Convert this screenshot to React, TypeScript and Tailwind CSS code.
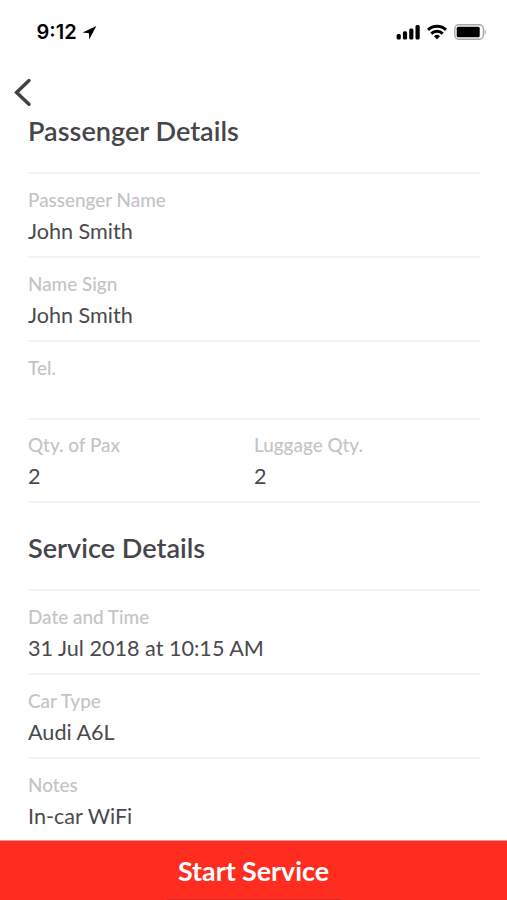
interface FieldProps {
  label: string;
  value?: string;
}

const Field = ({ label, value }: FieldProps) => (
  <div className="flex-1">
    <div className="text-[18.9px] leading-[24px] font-medium text-[#c4c4c6]">{label}</div>
    <div className="mt-[5px] h-[28px] text-[21.6px] leading-[28px] text-[#4a4a4e]">{value}</div>
  </div>
);

const StatusBar = () => (
  <div className="flex h-[64px] items-center justify-between pr-[20px] pl-[36.5px] font-['Inter',sans-serif] text-black">
    <div className="flex items-center gap-[5px]">
      <span className="text-[20px] font-semibold">9:12</span>
      <svg width="15" height="15" viewBox="0 0 15 15" fill="currentColor">
        <path d="M14.4 1 L7.2 14.6 L7 8.3 L0.6 7.4 Z" />
      </svg>
    </div>
    <div className="flex items-center gap-[7px]">
      <svg width="24" height="16" viewBox="0 0 24 16" fill="currentColor">
        <rect x="0.6" y="10" width="4.2" height="5.4" rx="1.5" />
        <rect x="6.9" y="7.3" width="4.2" height="8.1" rx="1.5" />
        <rect x="13.2" y="4.4" width="4.2" height="11" rx="1.5" />
        <rect x="19.5" y="1" width="4.2" height="14.4" rx="1.5" />
      </svg>
      <svg width="20" height="16" viewBox="0 0 20 16" fill="none" stroke="currentColor" strokeWidth="3">
        <path d="M1 5.8 A13 13 0 0 1 19 5.8" />
        <path d="M4.3 9.6 A8 8 0 0 1 15.7 9.6" />
        <path d="M7 12.3 A4.3 4.3 0 0 1 13 12.3 L10 15.4 Z" fill="currentColor" stroke="none" />
      </svg>
      <svg width="33" height="16" viewBox="0 0 33 16">
        <rect x="0.8" y="0.8" width="28.6" height="14.4" rx="4" fill="none" stroke="#a8a8a8" strokeWidth="1.4" />
        <rect x="2.7" y="2.7" width="23" height="10.6" rx="1.6" />
        <path d="M30.7 5.2 Q33.2 8 30.7 10.8 Z" fill="#a8a8a8" />
      </svg>
    </div>
  </div>
);

const App = () => (
  <div className="flex h-[900px] w-[507px] flex-col overflow-hidden bg-white font-['Lato',sans-serif]">
    <StatusBar />
    <header className="h-[108px] shrink-0 pt-[14px]">
      <svg
        className="ml-[13px]"
        width="20"
        height="29"
        viewBox="0 0 20 29"
        fill="none"
        stroke="#414144"
        strokeWidth="3.5"
        strokeLinecap="round"
      >
        <path d="M16 2.6 L3.6 14.5 L16 26.2" />
      </svg>
      <h1 className="mt-[7px] ml-[28px] text-[27.1px] leading-[34px] font-semibold text-[#46464a]">Passenger Details</h1>
    </header>
    <main className="mr-[27px] ml-[28px] flex-1 overflow-hidden">
      <div className="h-[84px] border-t-2 border-[#f3f3f4] pt-[14px]">
        <Field label="Passenger Name" value="John Smith" />
      </div>
      <div className="h-[84px] border-t-2 border-[#f3f3f4] pt-[14px]">
        <Field label="Name Sign" value="John Smith" />
      </div>
      <div className="h-[78px] border-t-2 border-[#f3f3f4] pt-[14px]">
        <Field label="Tel." />
      </div>
      <div className="flex h-[85px] border-y-2 border-[#f3f3f4] pt-[13px]">
        <Field label="Qty. of Pax" value="2" />
        <Field label="Luggage Qty." value="2" />
      </div>
      <h2 className="h-[86px] pt-[28px] text-[27.1px] leading-[34px] font-semibold text-[#46464a]">Service Details</h2>
      <div className="h-[84px] border-t-2 border-[#f3f3f4] pt-[14px]">
        <Field label="Date and Time" value="31 Jul 2018 at 10:15 AM" />
      </div>
      <div className="h-[84px] border-t-2 border-[#f3f3f4] pt-[14px]">
        <Field label="Car Type" value="Audi A6L" />
      </div>
      <div className="h-[84px] border-t-2 border-[#f3f3f4] pt-[14px]">
        <Field label="Notes" value="In-car WiFi" />
      </div>
    </main>
    <button className="flex h-[60px] shrink-0 flex-col items-center border-t border-[#ff9d96] bg-[#ff2d20] text-[26.8px] font-bold text-white">
      <span className="mt-[13px] h-[45px] leading-[34px]">Start Service</span>
      {/* top edge of the home indicator */}
      <span className="h-px w-[174px] bg-[#d62b26]" />
    </button>
  </div>
);

export default App;
